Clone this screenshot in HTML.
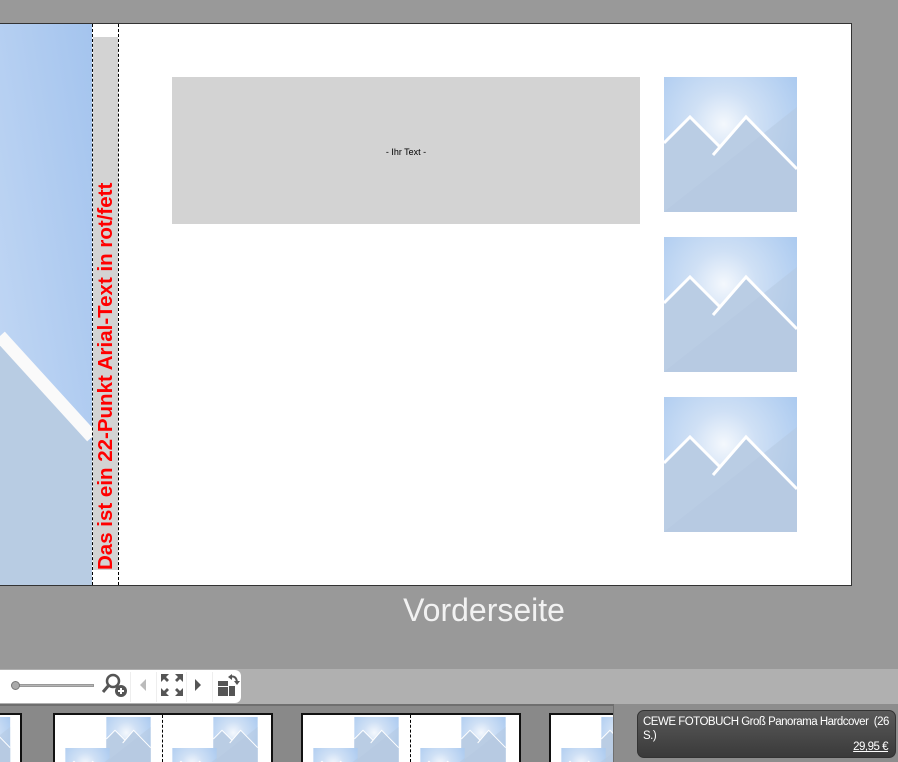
<!DOCTYPE html>
<html style="width:898px;height:762px;overflow:hidden"><head><meta charset="utf-8">
<style>
*{margin:0;padding:0;box-sizing:border-box}
body{width:898px;height:762px;background:#999;position:relative;overflow:hidden;font-family:"Liberation Sans",sans-serif}
.abs{position:absolute}
.page{left:-2px;top:23px;width:854px;height:563px;background:#fff;border:1px solid #333}
.dash{width:0;border-left:1px dashed #000}
</style></head><body>
<svg width="0" height="0" style="position:absolute">
<defs>
<radialGradient id="sky" cx="0.45" cy="0.35" r="0.7">
<stop offset="0" stop-color="#f4f8fd"/><stop offset="0.35" stop-color="#cfe0f5"/><stop offset="1" stop-color="#a6c7ef"/>
</radialGradient>
<symbol id="mt" viewBox="0 0 133 135">
<rect width="133" height="135" fill="url(#sky)"/>
<path d="M0 66 L26 40 L56 70 L49 77 L82 40 L133 92 L133 135 L0 135Z" fill="#bacde4"/>
<path d="M0 135 L133 30 L133 135Z" fill="#b4c8e0" opacity="0.5"/>
<path d="M0 66 L26 40 L56 70 M49 78 L82 40 L133 92" stroke="#fff" stroke-width="3" fill="none"/>
</symbol>
<linearGradient id="lb" x1="0" y1="1" x2="1" y2="0"><stop offset="0" stop-color="#c6daf5"/><stop offset="1" stop-color="#a4c4ee"/></linearGradient>
</defs></svg>

<div class="abs page"></div>
<svg class="abs" style="left:0;top:24px" width="92" height="561">
<rect width="92" height="561" fill="url(#lb)"/>
<path d="M0 318 L92 420 L92 561 L0 561Z" fill="#b8cce3"/>
<path d="M0 312 L92 413" stroke="#fafafa" stroke-width="13"/>
</svg>
<div class="abs" style="left:93px;top:37px;width:25px;height:533px;background:#d3d3d3"></div>
<div class="abs dash" style="left:92px;top:24px;height:561px"></div>
<div class="abs dash" style="left:118px;top:24px;height:561px"></div>
<div class="abs" style="left:94px;top:570px;transform-origin:0 0;transform:rotate(-90deg);white-space:nowrap;color:#f00;font-weight:bold;font-size:20.5px;line-height:24px">Das ist ein 22-Punkt Arial-Text in rot/fett</div>

<div class="abs" style="left:172px;top:77px;width:468px;height:147px;background:#d3d3d3;font-size:9px;color:#000;text-align:center;line-height:150px">- Ihr Text -</div>
<svg class="abs" style="left:664px;top:77px" width="133" height="135"><use href="#mt"/></svg>
<svg class="abs" style="left:664px;top:237px" width="133" height="135"><use href="#mt"/></svg>
<svg class="abs" style="left:664px;top:397px" width="133" height="135"><use href="#mt"/></svg>

<div class="abs" style="left:0;top:592px;width:968px;text-align:center;color:#f2f2f2;font-size:32px;font-family:'Liberation Sans',sans-serif">Vorderseite</div>

<div class="abs" style="left:0;top:669px;width:898px;height:35px;background:#b0b0b0"></div>
<div class="abs" style="left:0;top:670px;width:241px;height:33px;background:#fff;border-radius:0 6px 6px 0"></div>
<div class="abs" style="left:12px;top:684px;width:82px;height:3px;background:#b5b5b5;border:1px solid #999"></div>
<div class="abs" style="left:11px;top:681px;width:9px;height:9px;border-radius:50%;background:#aaa;border:1px solid #777"></div>
<svg class="abs" style="left:100px;top:672px" width="30" height="28">
<circle cx="13" cy="9" r="6" fill="none" stroke="#555" stroke-width="2.5"/><path d="M9 13 L3 20" stroke="#555" stroke-width="3"/>
<circle cx="21" cy="19" r="6" fill="#555"/><path d="M18 19h6M21 16v6" stroke="#fff" stroke-width="2"/>
</svg>
<div class="abs" style="left:130px;top:672px;width:1px;height:30px;background:#eee"></div>
<svg class="abs" style="left:138px;top:678px" width="10" height="14"><path d="M8 1 L2 7 L8 13Z" fill="#bbb"/></svg>
<div class="abs" style="left:156px;top:672px;width:1px;height:30px;background:#eee"></div>
<svg class="abs" style="left:160px;top:673px" width="24" height="24" fill="#555">
<path d="M1 1h8l-3 3 3 3-2 2-3-3-3 3z M23 1v8l-3-3-3 3-2-2 3-3-3-3z M1 23v-8l3 3 3-3 2 2-3 3 3 3z M23 23h-8l3-3-3-3 2-2 3 3 3-3z"/></svg>
<div class="abs" style="left:186px;top:672px;width:1px;height:30px;background:#eee"></div>
<svg class="abs" style="left:193px;top:678px" width="10" height="14"><path d="M2 1 L8 7 L2 13Z" fill="#555"/></svg>
<div class="abs" style="left:212px;top:672px;width:1px;height:30px;background:#eee"></div>
<svg class="abs" style="left:216px;top:673px" width="26" height="26" fill="#555">
<rect x="2" y="8" width="10" height="5"/><rect x="2" y="14" width="10" height="9"/><rect x="13" y="13" width="6" height="10"/>
<path d="M14 4 Q20 2 21 9" stroke="#555" stroke-width="2" fill="none"/><path d="M18 8 L21 12 L24 8Z"/><path d="M12 4 L16 1 L16 7Z"/>
</svg>

<div class="abs" style="left:0;top:704px;width:898px;height:58px;background:#8d8d8d;overflow:hidden">
<div class="abs" style="left:0;top:0;width:614px;height:58px;background:#898989;border-top:2px solid #6f6f6f;border-right:1px solid #6f6f6f"></div>
<div class="abs" style="left:-2px;top:9px;width:24px;height:60px;background:#fff;border:2px solid #111"></div>
<svg class="abs" style="left:0;top:13px" width="12" height="45"><use href="#mt" x="-36" y="0" width="48" height="45"/></svg>
<div class="abs" style="left:53px;top:9px;width:220px;height:60px;background:#fff;border:2px solid #111"></div>
<svg class="abs" style="left:105px;top:13px" width="47" height="45"><use href="#mt"/></svg>
<svg class="abs" style="left:65px;top:44px" width="45" height="14"><use href="#mt" width="45" height="45"/></svg>
<svg class="abs" style="left:212px;top:13px" width="47" height="45"><use href="#mt"/></svg>
<svg class="abs" style="left:172px;top:44px" width="45" height="14"><use href="#mt" width="45" height="45"/></svg>
<div class="abs dash" style="left:162px;top:11px;height:47px"></div>
<div class="abs" style="left:301px;top:9px;width:220px;height:60px;background:#fff;border:2px solid #111"></div>
<svg class="abs" style="left:353px;top:13px" width="47" height="45"><use href="#mt"/></svg>
<svg class="abs" style="left:313px;top:44px" width="45" height="14"><use href="#mt" width="45" height="45"/></svg>
<svg class="abs" style="left:460px;top:13px" width="47" height="45"><use href="#mt"/></svg>
<svg class="abs" style="left:420px;top:44px" width="45" height="14"><use href="#mt" width="45" height="45"/></svg>
<div class="abs dash" style="left:410px;top:11px;height:47px"></div>
<div class="abs" style="left:549px;top:9px;width:64px;height:60px;background:#fff;border:2px solid #111;border-right:none"></div>
<svg class="abs" style="left:600px;top:13px" width="13" height="45"><use href="#mt" width="47" height="45"/></svg>
<svg class="abs" style="left:561px;top:44px" width="45" height="14"><use href="#mt" width="45" height="45"/></svg>
<div class="abs" style="left:637px;top:6px;width:259px;height:48px;border-radius:7px;background:linear-gradient(#5a5a5a,#3a3a3a);border:1px solid #333;color:#fff;font-size:11.5px;font-family:'Liberation Sans',sans-serif;letter-spacing:-0.5px;padding:4px 5px 0 5px;line-height:14px;white-space:nowrap">
CEWE FOTOBUCH Groß Panorama Hardcover&nbsp; (26<br>S.)
<div style="position:absolute;right:7px;top:29px;text-decoration:underline">29,95 €</div></div>
</div>
</body></html>
